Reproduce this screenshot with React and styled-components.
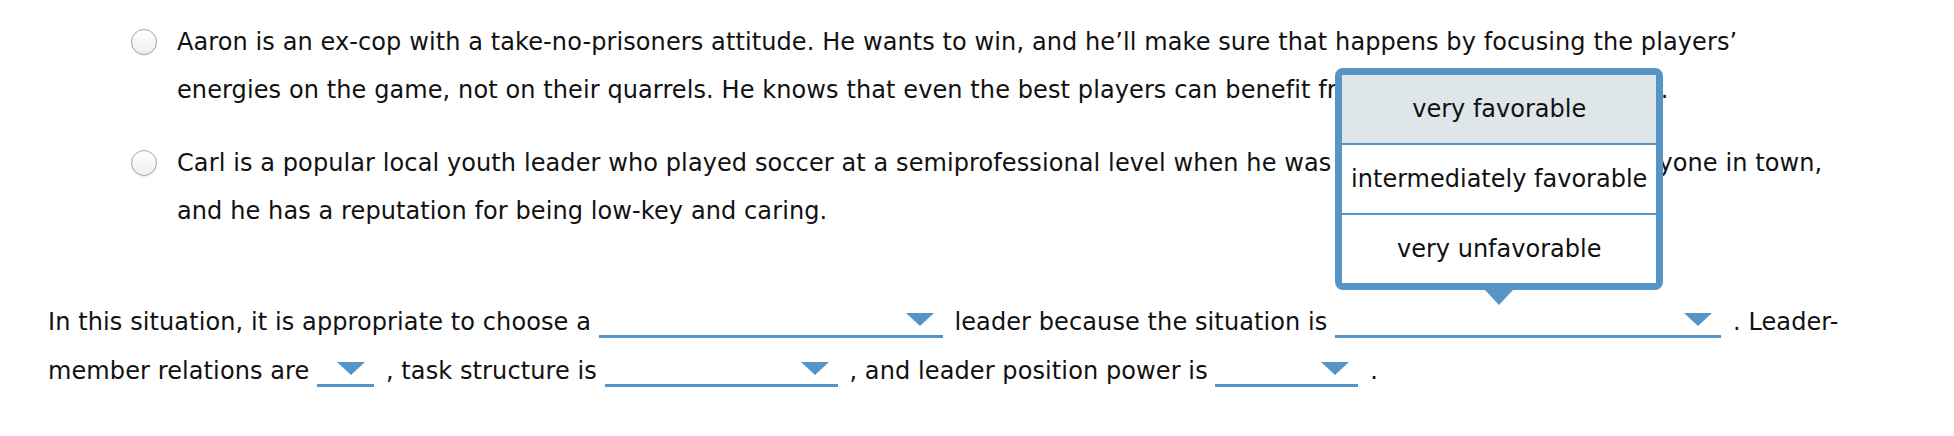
import React from 'react';
import styled, { createGlobalStyle } from 'styled-components';

const BLUE = '#5895c7';

const GlobalStyle = createGlobalStyle`
  html, body { margin: 0; padding: 0; background: #ffffff; }
  body { font-family: "DejaVu Sans", Verdana, sans-serif; color: #111111; }
`;

const Page = styled.div`
  padding: 18px 60px 0 48px;
  font-size: 24px;
  letter-spacing: 0.1px;
`;

const Options = styled.div`
  display: flex;
  flex-direction: column;
  gap: 25px;
  margin-left: 83px;
  width: 1709px;
`;

const OptionRow = styled.label`
  display: flex;
  align-items: flex-start;
  gap: 20px;
`;

const Radio = styled.span`
  flex: none;
  width: 26px;
  height: 26px;
  margin-top: 11px;
  box-sizing: border-box;
  border-radius: 50%;
  border: 1px solid #a4a4a4;
  background: linear-gradient(#ffffff, #eeeeee);
  box-shadow: 0 1px 1px rgba(0, 0, 0, 0.08);
`;

const OptionText = styled.span`
  flex: 1;
  line-height: 48px;
`;

const Sentence = styled.p`
  margin: 63px 0 0;
  line-height: 49px;
`;

const Dropdown = styled.span`
  display: inline-block;
  position: relative;
  vertical-align: -8px;
  width: ${(p) => p.$w}px;
  height: 26px;
  border-bottom: 3px solid ${BLUE};
  margin-right: 4px;
`;

const Caret = styled.svg`
  display: block;
  width: 28px;
  height: 13px;
  margin: 4px 9px 0 auto;
`;

const Listbox = styled.div`
  position: absolute;
  left: 0;
  bottom: 45px;
  z-index: 10;
  width: 328px;
  box-sizing: border-box;
  border: 7px solid ${BLUE};
  border-radius: 8px;
  background: #ffffff;
  text-align: center;
  line-height: 68px;
  letter-spacing: 0;

  &::after {
    content: '';
    position: absolute;
    top: calc(100% + 7px);
    left: 50%;
    margin-left: -14.5px;
    border-left: 14.5px solid transparent;
    border-right: 14.5px solid transparent;
    border-top: 15px solid ${BLUE};
  }
`;

const ListItem = styled.div`
  height: 68px;
  white-space: nowrap;
  background: ${(p) => (p.$active ? '#dfe6e9' : '#ffffff')};
  & + & {
    border-top: 2px solid ${BLUE};
  }
`;

const CaretIcon = () => (
  <Caret viewBox="0 0 28 13">
    <polygon points="0,0 28,0 14,13" fill={BLUE} />
  </Caret>
);

const Select = ({ w, children }) => (
  <Dropdown $w={w}>
    <CaretIcon />
    {children}
  </Dropdown>
);

export default function App() {
  return (
    <>
      <GlobalStyle />
      <Page>
        <Options>
          <OptionRow>
            <Radio />
            <OptionText>
              Aaron is an ex-cop with a take-no-prisoners attitude. He wants to win, and he’ll make sure
              that happens by focusing the players’ energies on the game, not on their quarrels. He knows
              that even the best players can benefit from a bold, focused mentor.
            </OptionText>
          </OptionRow>
          <OptionRow>
            <Radio />
            <OptionText>
              Carl is a popular local youth leader who played soccer at a semiprofessional level when he
              was younger, and charms everyone in town, and he has a reputation for being low-key and
              caring.
            </OptionText>
          </OptionRow>
        </Options>
        <Sentence>
          In this situation, it is appropriate to choose a{' '}
          <Select w={344} />{' '}
          leader because the situation is{' '}
          <Select w={386}>
            <Listbox>
              <ListItem $active>very favorable</ListItem>
              <ListItem>intermediately favorable</ListItem>
              <ListItem>very unfavorable</ListItem>
            </Listbox>
          </Select>{' '}
          . Leader-member relations are{' '}
          <Select w={57} />{' '}
          , task structure is{' '}
          <Select w={233} />{' '}
          , and leader position power is{' '}
          <Select w={143} />{' '}
          .
        </Sentence>
      </Page>
    </>
  );
}
